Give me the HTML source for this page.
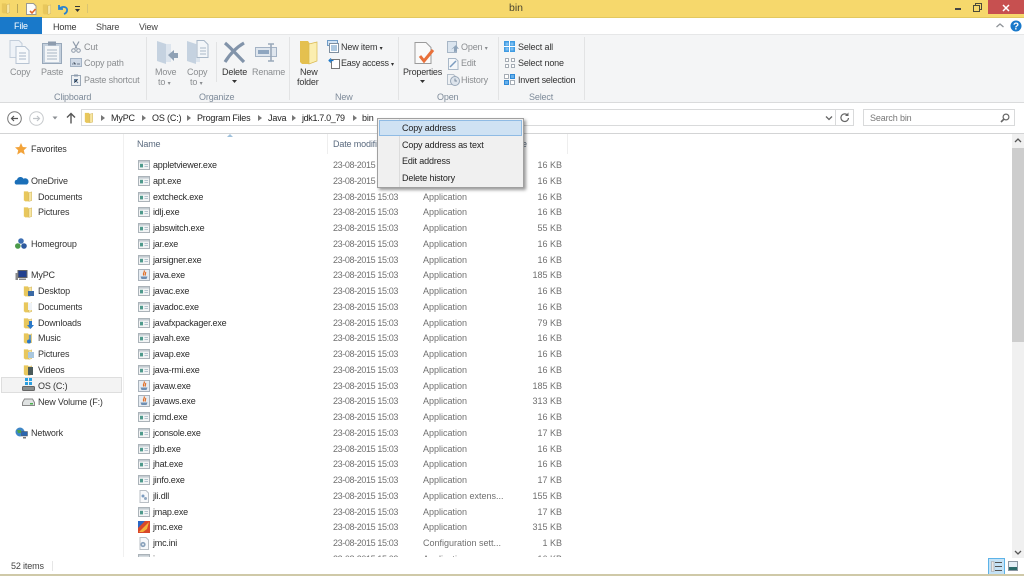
<!DOCTYPE html>
<html><head><meta charset="utf-8"><title>bin</title>
<style>
html,body{margin:0;padding:0;width:1024px;height:576px;overflow:hidden;background:#fff}
body{position:relative;font:9px/12px "Liberation Sans",sans-serif;color:#222;letter-spacing:-.15px;filter:blur(.35px)}
.t{position:absolute;white-space:nowrap;line-height:12px}
.g{color:#8a8d90}
.l{color:#7d8a99;text-align:center}
svg{position:absolute;overflow:visible}
#rows{position:absolute;left:0;top:154px;width:1010px;height:403px;overflow:hidden}
.r{position:absolute;left:0;width:1010px;height:15px}
.r svg{left:138px;top:0;transform:translateY(1px)}
.r b,.r i,.r u,.r s{position:absolute;top:2px;font-weight:normal;font-style:normal;text-decoration:none;white-space:nowrap}
.r b{left:153px;color:#2b2b2b;letter-spacing:-.2px}
.r i{left:333px;color:#707070;letter-spacing:-.38px}
.r u{left:423px;color:#707070;letter-spacing:0}
.r s{right:448px;color:#707070;letter-spacing:0}
.n{color:#333}
</style></head><body>
<svg width="0" height="0" style="position:absolute">
<defs>
<symbol id="fo" viewBox="0 0 12 14"><path d="M1 1.500h5l1 1.500v10.500H2.500L1 12z" fill="#e8c75c"/><path d="M7 3l3.500-1v10.500L7 13.500z" fill="#f7e6a3" stroke="#c9a94d" stroke-width=".5"/></symbol>
<symbol id="ex" viewBox="0 0 12 10"><rect x=".5" y=".5" width="11" height="9" fill="#f2f4f5" stroke="#abb3b9"/><rect x="1" y="1" width="10" height="1.600" fill="#c4ccd2"/><rect x="2" y="3.800" width="3" height="3.600" fill="#4f9a8c"/><path d="M6.500 4.500h3.500M6.500 6.500h3.500" stroke="#b3c3cf"/></symbol>
<symbol id="ja" viewBox="0 0 12 12"><rect x=".5" y=".5" width="11" height="11" fill="#e6ecf2" stroke="#a9b2bb"/><path d="M6 1.500c1.500 1.800-2 2.500 0 5M7.500 3c.8 1.200-1 1.800 0 3.500" stroke="#e0702a" stroke-width="1.200" fill="none"/><path d="M2.500 7.500h7l-1 2.500h-5z" fill="#6f8fb2"/></symbol>
<symbol id="dl" viewBox="0 0 12 13"><path d="M2 .5h6l2.500 2.500v9.500H2z" fill="#f7f8fa" stroke="#b9bfc5"/><circle cx="5" cy="6" r="1.500" fill="#7c9cc0"/><circle cx="7.500" cy="8.500" r="1.500" fill="#93a9c2"/></symbol>
<symbol id="in" viewBox="0 0 12 13"><path d="M2 .5h6l2.500 2.500v9.500H2z" fill="#f7f8fa" stroke="#b9bfc5"/><circle cx="5" cy="7.500" r="2.600" fill="#8aa2bb"/><circle cx="5" cy="7.500" r="1" fill="#e8eef3"/></symbol>
<symbol id="jm" viewBox="0 0 12 12"><rect width="12" height="12" fill="#d8472a"/><path d="M0 0h7L0 7z" fill="#2b66c4"/><path d="M1 11L11 1l-2 7-4 3z" fill="#f3b23a"/></symbol>
</defs></svg>

<!-- title bar -->
<div style="position:absolute;left:0;top:0;width:1024px;height:17px;background:#f6d86c;border-bottom:1px solid #e2c860"></div>
<svg style="left:1px;top:2px" width="10" height="12"><use href="#fo" width="10" height="12"/></svg>
<div style="position:absolute;left:17px;top:4px;width:1px;height:9px;background:#b7a458"></div>
<svg style="left:26px;top:3px" width="11" height="12"><path d="M.5.500h7l2.500 2.500v8.500H.5z" fill="#fdfdfb" stroke="#9a9a92"/><path d="M4 8l2 2 3.500-4" stroke="#e0662d" stroke-width="1.600" fill="none"/></svg>
<svg style="left:42px;top:3px" width="10" height="12"><use href="#fo" width="10" height="12"/></svg>
<svg style="left:57px;top:3px" width="12" height="12"><path d="M2 2v4h4M2.500 5.500C6 2.500 11 4 10 8c-.4 1.600-1.600 2.500-3 3" stroke="#2a83d0" stroke-width="1.800" fill="none"/></svg>
<svg style="left:74px;top:6px" width="7" height="7"><path d="M1 .5h5" stroke="#333"/><path d="M1 3h5L3.500 6z" fill="#333"/></svg>
<div style="position:absolute;left:87px;top:4px;width:1px;height:9px;background:#d9c472"></div>
<div class="t" style="left:509px;top:2px;font-size:10.500px;color:#4a4430;letter-spacing:0">bin</div>
<div style="position:absolute;left:955px;top:8px;width:6px;height:2px;background:#444"></div>
<svg style="left:973px;top:3px" width="9" height="9"><path d="M2.500 2.500V.5h6v6h-2M.5 2.500h6v6h-6z" fill="none" stroke="#4b4a3a"/></svg>
<div style="position:absolute;left:988px;top:0;width:36px;height:14px;background:#c75050"></div>
<svg style="left:1002px;top:4px" width="8" height="8"><path d="M1 1l6 6M7 1L1 7" stroke="#fff" stroke-width="1.500"/></svg>

<!-- tabs -->
<div style="position:absolute;left:0;top:17px;width:42px;height:18px;background:#1979ca"></div>
<div class="t" style="left:14px;top:20px;color:#fff">File</div>
<div style="position:absolute;left:42px;top:18px;width:43px;height:17px;background:#fff"></div>
<div class="t" style="left:53px;top:21px;color:#333">Home</div>
<div class="t" style="left:96px;top:21px;color:#444">Share</div>
<div class="t" style="left:139px;top:21px;color:#444">View</div>
<svg style="left:996px;top:23px" width="8" height="5"><path d="M.5 4L4 1l3.500 3" stroke="#8f9499" stroke-width="1.300" fill="none"/></svg>
<svg style="left:1010px;top:20px" width="12" height="12"><circle cx="6" cy="6" r="5.500" fill="#1979ca"/><text x="6" y="9.500" text-anchor="middle" font-size="10" font-weight="bold" fill="#fff" font-family="Liberation Sans">?</text></svg>

<!-- ribbon -->
<div style="position:absolute;left:0;top:34px;width:1024px;height:69px;background:#f4f5f6;border-top:1px solid #e6e7e8;border-bottom:1px solid #dadbdc;box-sizing:border-box"></div>
<div style="position:absolute;left:146px;top:37px;width:1px;height:63px;background:#e2e3e4"></div>
<div style="position:absolute;left:289px;top:37px;width:1px;height:63px;background:#e2e3e4"></div>
<div style="position:absolute;left:398px;top:37px;width:1px;height:63px;background:#e2e3e4"></div>
<div style="position:absolute;left:498px;top:37px;width:1px;height:63px;background:#e2e3e4"></div>
<div style="position:absolute;left:584px;top:37px;width:1px;height:63px;background:#e2e3e4"></div>
<div style="position:absolute;left:216px;top:42px;width:1px;height:40px;background:#e2e3e4"></div>

<!-- clipboard -->
<svg style="left:9px;top:40px" width="22" height="24"><path d="M1 .5h9l3 3v14H1z" fill="#eef2f7" stroke="#c3cedb"/><path d="M7 6.500h9l4 4v13H7z" fill="#f7f9fb" stroke="#b7c4d3"/><path d="M10 13h7M10 16h7M10 19h7" stroke="#aab8c8"/></svg>
<svg style="left:42px;top:41px" width="20" height="23"><rect x=".5" y="2.500" width="19" height="20" fill="#c4d0dd" stroke="#98a8ba"/><rect x="3" y="5" width="14" height="16" fill="#f4f6f8"/><rect x="6" y=".5" width="8" height="4" fill="#8d9cae"/><path d="M5 9h10M5 12h10M5 15h10M5 18h10" stroke="#a8b5c4"/></svg>
<svg style="left:71px;top:41px" width="10" height="12"><path d="M2 .5l4 7M8 .5l-4 7" stroke="#8d99a8" stroke-width="1.200"/><circle cx="2.500" cy="9.500" r="1.800" fill="none" stroke="#8d99a8"/><circle cx="7.500" cy="9.500" r="1.800" fill="none" stroke="#8d99a8"/></svg>
<svg style="left:70px;top:58px" width="12" height="10"><rect x=".5" y=".5" width="11" height="8" fill="#cfd9e6" stroke="#a3b2c4"/><path d="M2 6h1M4 4v2h2M7 6h3" stroke="#6d7c8e"/></svg>
<svg style="left:71px;top:74px" width="11" height="12"><rect x=".5" y="1.500" width="9" height="10" fill="#eef1f4" stroke="#9aa7b6"/><rect x="3" y=".5" width="4" height="2" fill="#8d9cae"/><path d="M3.500 9V5.500H7M3.500 5.500L7 9" stroke="#5f7894"/></svg>
<div class="t g" style="left:10px;top:66px">Copy</div>
<div class="t g" style="left:41px;top:66px">Paste</div>
<div class="t g" style="left:84px;top:41px">Cut</div>
<div class="t g" style="left:84px;top:57px">Copy path</div>
<div class="t g" style="left:84px;top:74px">Paste shortcut</div>
<div class="t l" style="left:54px;top:91px">Clipboard</div>

<!-- organize -->
<svg style="left:156px;top:40px" width="23" height="25"><path d="M1 1l9 3v20l-9-3z" fill="#c5d2e0"/><path d="M10 4h5v18h-5z" fill="#dde5ee"/><path d="M12 15l6-5v3h4v5h-4v3z" fill="#8fa1b5"/></svg>
<svg style="left:186px;top:40px" width="23" height="25"><path d="M1 1l9 3v20l-9-3z" fill="#c5d2e0"/><path d="M10 4h4v18h-4z" fill="#dde5ee"/><path d="M11 .5h7l4 4v13H11z" fill="#f3f6f9" stroke="#a9b8c8"/><path d="M14 8h6M14 11h6M14 14h6" stroke="#a9b8c8"/></svg>
<svg style="left:223px;top:42px" width="23" height="21"><path d="M2 1c6 5 12 12 19 19M21 1C14 5 7 12 2 20" stroke="#8294aa" stroke-width="3.200" fill="none"/></svg>
<svg style="left:255px;top:43px" width="24" height="20"><rect x=".5" y="4.500" width="21" height="9" fill="#dfe6ee" stroke="#a3b2c4"/><rect x="3" y="7" width="11" height="4" fill="#8fa6c0"/><path d="M13 1h6M13 18h6M16 1v17" stroke="#9aa9ba" stroke-width="1.600"/></svg>
<div class="t g" style="left:155px;top:66px">Move</div>
<div class="t g" style="left:158px;top:76px">to <span style="font-size:6px">&#9662;</span></div>
<div class="t g" style="left:187px;top:66px">Copy</div>
<div class="t g" style="left:190px;top:76px">to <span style="font-size:6px">&#9662;</span></div>
<div class="t" style="left:222px;top:66px;color:#333">Delete</div>
<svg style="left:232px;top:80px" width="5" height="4"><path d="M0 0h5L2.500 3z" fill="#333"/></svg>
<div class="t g" style="left:252px;top:66px">Rename</div>
<div class="t l" style="left:199px;top:91px">Organize</div>

<!-- new -->
<svg style="left:299px;top:40px" width="20" height="25"><path d="M1 1h8l2 3v20H3l-2-2z" fill="#e4c04f"/><path d="M10 4l8-2v19l-8 3z" fill="#fbeeb0" stroke="#d9b850" stroke-width=".7"/></svg>
<svg style="left:327px;top:40px" width="12" height="13"><rect x=".5" y=".5" width="10" height="5" fill="#d2e4f5" stroke="#6f9cc7"/><rect x="2.500" y="3.500" width="9" height="9" fill="#fff" stroke="#7f8f9f"/><path d="M4 6h6M4 8h6M4 10h6" stroke="#5a8fbf"/></svg>
<svg style="left:328px;top:57px" width="12" height="12"><path d="M3.500 2.500h8v9h-8z" fill="#fff" stroke="#777"/><path d="M.5 3.500h5M1 3.500l2-2M1 3.500l2 2" stroke="#1c78c8" stroke-width="1.200" fill="none"/></svg>
<div class="t n" style="left:341px;top:41px">New item <span style="font-size:6px">&#9662;</span></div>
<div class="t n" style="left:341px;top:57px;letter-spacing:-.25px">Easy access <span style="font-size:6px">&#9662;</span></div>
<div class="t n" style="left:300px;top:66px">New</div>
<div class="t n" style="left:297px;top:76px">folder</div>
<div class="t l" style="left:335px;top:91px">New</div>

<!-- open -->
<svg style="left:414px;top:42px" width="22" height="22"><path d="M1 .5h11l5 5v16H1z" fill="#fafafa" stroke="#9b9b9b"/><path d="M6 14l4 5 9-11" stroke="#e8703a" stroke-width="3" fill="none"/></svg>
<svg style="left:447px;top:41px" width="12" height="12"><rect x=".5" y=".5" width="9" height="11" fill="#dbe5ef" stroke="#a7b6c6"/><path d="M7 11V7l-3 1.500 5-4.500 3 4-2-.5v3z" fill="#8fa4ba"/></svg>
<svg style="left:448px;top:58px" width="11" height="12"><path d="M.5.500h7l2.500 2.500v8.500H.5z" fill="#f4f7fa" stroke="#a9b8c8"/><path d="M2 9l6-6" stroke="#7c9cc0" stroke-width="1.500"/></svg>
<svg style="left:447px;top:74px" width="13" height="12"><path d="M.5.500h6l2 2v8H.5z" fill="#eef1f4" stroke="#b5bfca"/><circle cx="8" cy="7" r="4.500" fill="#dde4ec" stroke="#98a7b8"/><path d="M8 4.500V7h2" stroke="#7a8a9c" fill="none"/></svg>
<div class="t n" style="left:403px;top:66px;letter-spacing:-.2px">Properties</div>
<svg style="left:420px;top:80px" width="5" height="4"><path d="M0 0h5L2.500 3z" fill="#333"/></svg>
<div class="t g" style="left:461px;top:41px">Open <span style="font-size:6px">&#9662;</span></div>
<div class="t g" style="left:461px;top:57px">Edit</div>
<div class="t g" style="left:461px;top:74px">History</div>
<div class="t l" style="left:437px;top:91px">Open</div>

<!-- select -->
<svg style="left:504px;top:41px" width="11" height="11"><rect width="11" height="11" fill="#3f9be2"/><path d="M0 5.500h11M5.500 0v11" stroke="#fff"/><path d="M1.500 1.500h3v3h-3zM6.500 1.500h3v3h-3zM1.500 6.500h3v3h-3zM6.500 6.500h3v3h-3z" fill="#7fc0f2"/></svg>
<svg style="left:505px;top:58px" width="10" height="10"><path d="M.5.500h3v3h-3zM6.500.500h3v3h-3zM.5 6.500h3v3h-3zM6.500 6.500h3v3h-3z" fill="#fff" stroke="#a6adb5"/></svg>
<svg style="left:504px;top:74px" width="11" height="11"><path d="M.5.500h4v4h-4zM6.500 6.500h4v4h-4z" fill="#fff" stroke="#a6adb5"/><path d="M6.500.500h4v4h-4zM.5 6.500h4v4h-4z" fill="#67b0ea" stroke="#2f8ad8"/></svg>
<div class="t n" style="left:518px;top:41px">Select all</div>
<div class="t n" style="left:518px;top:57px">Select none</div>
<div class="t n" style="left:518px;top:74px;letter-spacing:-.2px">Invert selection</div>
<div class="t l" style="left:529px;top:91px">Select</div>

<!-- address row -->
<svg style="left:7px;top:111px" width="15" height="15"><circle cx="7.500" cy="7.500" r="6.800" fill="#fff" stroke="#777"/><path d="M11 7.500H4.500M7 5L4.500 7.500 7 10" stroke="#555" stroke-width="1.200" fill="none"/></svg>
<svg style="left:29px;top:111px" width="15" height="15"><circle cx="7.500" cy="7.500" r="6.800" fill="#fff" stroke="#c6c9cc"/><path d="M4 7.500h6.500M8 5l2.500 2.500L8 10" stroke="#c0c4c8" stroke-width="1.200" fill="none"/></svg>
<svg style="left:52px;top:116px" width="6" height="4"><path d="M.5.500h5L3 3.500z" fill="#8b8f93"/></svg>
<svg style="left:66px;top:112px" width="10" height="12"><path d="M5 11.500V1.500M1 5.500l4-4 4 4" stroke="#555" stroke-width="1.400" fill="none"/></svg>
<div style="position:absolute;left:81px;top:109px;width:773px;height:17px;box-sizing:border-box;background:#fff;border:1px solid #d9dadb"></div>
<div style="position:absolute;left:835px;top:110px;width:1px;height:15px;background:#d9dadb"></div>
<svg style="left:84px;top:111px" width="10" height="13"><use href="#fo" width="10" height="13"/></svg>
<svg style="left:101px;top:115px" width="4" height="6"><path d="M0 0l4 3-4 3z" fill="#777"/></svg>
<svg style="left:142px;top:115px" width="4" height="6"><path d="M0 0l4 3-4 3z" fill="#777"/></svg>
<svg style="left:187px;top:115px" width="4" height="6"><path d="M0 0l4 3-4 3z" fill="#777"/></svg>
<svg style="left:258px;top:115px" width="4" height="6"><path d="M0 0l4 3-4 3z" fill="#777"/></svg>
<svg style="left:292px;top:115px" width="4" height="6"><path d="M0 0l4 3-4 3z" fill="#777"/></svg>
<svg style="left:353px;top:115px" width="4" height="6"><path d="M0 0l4 3-4 3z" fill="#777"/></svg>
<div class="t" style="left:111px;top:112px">MyPC</div>
<div class="t" style="left:152px;top:112px">OS (C:)</div>
<div class="t" style="left:197px;top:112px;letter-spacing:-.2px">Program Files</div>
<div class="t" style="left:268px;top:112px">Java</div>
<div class="t" style="left:302px;top:112px;letter-spacing:-.35px">jdk1.7.0_79</div>
<div class="t" style="left:362px;top:112px">bin</div>
<svg style="left:825px;top:116px" width="8" height="5"><path d="M1 .5L4 3.500 7 .5" stroke="#666" stroke-width="1.300" fill="none"/></svg>
<svg style="left:840px;top:112px" width="10" height="11"><path d="M8.500 6a3.800 3.800 0 1 1-1.300-3.200" stroke="#666" stroke-width="1.200" fill="none"/><path d="M8.500.5v3.500H5z" fill="#666"/></svg>
<div style="position:absolute;left:863px;top:109px;width:152px;height:17px;box-sizing:border-box;background:#fff;border:1px solid #d9dadb"></div>
<div class="t" style="left:870px;top:112px;color:#777">Search bin</div>
<svg style="left:1000px;top:113px" width="10" height="10"><circle cx="6" cy="4" r="2.900" fill="none" stroke="#666" stroke-width="1.200"/><path d="M4 6L1 9" stroke="#666" stroke-width="1.600"/></svg>
<div style="position:absolute;left:0;top:133px;width:1024px;height:1px;background:#d3d4d5"></div>

<!-- nav pane -->
<div style="position:absolute;left:123px;top:134px;width:1px;height:424px;background:#f0f0f0"></div>
<svg style="left:15px;top:143px" width="12" height="12"><path d="M6 0l1.800 4 4.200.4-3.200 2.900 1 4.300L6 9.300 2.200 11.600l1-4.300L0 4.400 4.200 4z" fill="#f2a33a"/></svg>
<div class="t n" style="left:31px;top:143px">Favorites</div>
<svg style="left:15px;top:176px" width="13" height="9"><path d="M1 8.500a2.500 2.500 0 0 1 1-4.700 3.500 3.500 0 0 1 6.500-1 3 3 0 0 1 3.500 5.700z" fill="#1b6fb8"/></svg>
<div class="t n" style="left:31px;top:175px">OneDrive</div>
<svg style="left:23px;top:190px" width="10" height="12"><use href="#fo" width="10" height="12"/></svg>
<div class="t n" style="left:38px;top:191px">Documents</div>
<svg style="left:23px;top:206px" width="10" height="12"><use href="#fo" width="10" height="12"/></svg>
<div class="t n" style="left:38px;top:206px">Pictures</div>
<svg style="left:15px;top:238px" width="12" height="12"><circle cx="6" cy="3" r="2.800" fill="#3e6fb3"/><circle cx="2.800" cy="8" r="2.800" fill="#4c9a4a"/><circle cx="9" cy="8" r="2.800" fill="#2e5a9e"/></svg>
<div class="t n" style="left:31px;top:238px">Homegroup</div>
<svg style="left:15px;top:270px" width="13" height="11"><rect x="3" y=".5" width="9" height="7" fill="#23418f" stroke="#666"/><rect x=".5" y="3" width="2.500" height="7" fill="#888"/><rect x="4" y="8.500" width="7" height="1.500" fill="#888"/></svg>
<div class="t n" style="left:31px;top:269px">MyPC</div>
<svg style="left:23px;top:285px" width="10" height="12"><use href="#fo" width="10" height="12"/></svg><div style="position:absolute;left:28px;top:291px;width:6px;height:5px;background:#3b6aa5"></div>
<div class="t n" style="left:38px;top:285px">Desktop</div>
<svg style="left:23px;top:301px" width="10" height="12"><use href="#fo" width="10" height="12"/></svg><div style="position:absolute;left:28px;top:303px;width:4px;height:7px;background:#eef2f6"></div>
<div class="t n" style="left:38px;top:301px">Documents</div>
<svg style="left:23px;top:317px" width="10" height="12"><use href="#fo" width="10" height="12"/></svg><svg style="left:27px;top:321px" width="7" height="8"><path d="M2 0h3v4h2L3.500 8 0 4h2z" fill="#2a78c8"/></svg>
<div class="t n" style="left:38px;top:317px">Downloads</div>
<svg style="left:23px;top:332px" width="10" height="12"><use href="#fo" width="10" height="12"/></svg><svg style="left:27px;top:335px" width="7" height="9"><path d="M3 0v6" stroke="#2a78c8" stroke-width="1.400"/><circle cx="2" cy="6.500" r="2" fill="#2a78c8"/></svg>
<div class="t n" style="left:38px;top:332px">Music</div>
<svg style="left:23px;top:348px" width="10" height="12"><use href="#fo" width="10" height="12"/></svg><div style="position:absolute;left:28px;top:352px;width:6px;height:6px;background:#a9c7de"></div>
<div class="t n" style="left:38px;top:348px">Pictures</div>
<svg style="left:23px;top:364px" width="10" height="12"><use href="#fo" width="10" height="12"/></svg><div style="position:absolute;left:28px;top:367px;width:5px;height:8px;background:#4a5a5a"></div>
<div class="t n" style="left:38px;top:364px">Videos</div>
<div style="position:absolute;left:1px;top:377px;width:121px;height:16px;box-sizing:border-box;background:#f3f3f3;border:1px solid #dedede"></div>
<svg style="left:22px;top:378px" width="13" height="14"><path d="M3 0h3v3H3zM7 0h3v3H7zM3 4h3v3H3zM7 4h3v3H7z" fill="#2a9fe0"/><rect x=".5" y="8.500" width="12" height="4" rx="1" fill="#8a8f8f" stroke="#666"/></svg>
<div class="t n" style="left:38px;top:380px">OS (C:)</div>
<svg style="left:22px;top:398px" width="13" height="9"><path d="M2.500 1h8l2 3.500v3H.5v-3z" fill="#dfe2e2" stroke="#888"/><rect x="8" y="5" width="3" height="1.500" fill="#4caf50"/></svg>
<div class="t n" style="left:38px;top:396px">New Volume (F:)</div>
<svg style="left:15px;top:427px" width="13" height="12"><circle cx="5" cy="5" r="4.500" fill="#3e86c6"/><path d="M2 3h4v3H3z" fill="#4ba24a"/><rect x="6.500" y="4.500" width="6" height="4.500" fill="#2a66b0" stroke="#555" stroke-width=".5"/><rect x="8" y="10" width="3" height="1.500" fill="#777"/></svg>
<div class="t n" style="left:31px;top:427px">Network</div>

<!-- headers -->
<div class="t" style="left:137px;top:138px;color:#5a6a7e">Name</div>
<div class="t" style="left:333px;top:138px;color:#5a6a7e">Date modified</div>
<div class="t" style="left:510px;top:138px;color:#5a6a7e">Size</div>
<svg style="left:227px;top:134px" width="6" height="3"><path d="M0 3l3-3 3 3z" fill="#9fc1dc"/></svg>
<div style="position:absolute;left:327px;top:134px;width:1px;height:20px;background:#eeeeee"></div>
<div style="position:absolute;left:567px;top:134px;width:1px;height:20px;background:#eeeeee"></div>

<!-- rows -->
<div id="rows">
<div class="r" style="top:3px"><svg width="12" height="10" style="top:2px"><use href="#ex"/></svg><b>appletviewer.exe</b><i>23-08-2015 15:03</i><u>Application</u><s>16 KB</s></div>
<div class="r" style="top:18.750px"><svg width="12" height="10" style="top:2px"><use href="#ex"/></svg><b>apt.exe</b><i>23-08-2015 15:03</i><u>Application</u><s>16 KB</s></div>
<div class="r" style="top:34.500px"><svg width="12" height="10" style="top:2px"><use href="#ex"/></svg><b>extcheck.exe</b><i>23-08-2015 15:03</i><u>Application</u><s>16 KB</s></div>
<div class="r" style="top:50.250px"><svg width="12" height="10" style="top:2px"><use href="#ex"/></svg><b>idlj.exe</b><i>23-08-2015 15:03</i><u>Application</u><s>16 KB</s></div>
<div class="r" style="top:66px"><svg width="12" height="10" style="top:2px"><use href="#ex"/></svg><b>jabswitch.exe</b><i>23-08-2015 15:03</i><u>Application</u><s>55 KB</s></div>
<div class="r" style="top:81.750px"><svg width="12" height="10" style="top:2px"><use href="#ex"/></svg><b>jar.exe</b><i>23-08-2015 15:03</i><u>Application</u><s>16 KB</s></div>
<div class="r" style="top:97.500px"><svg width="12" height="10" style="top:2px"><use href="#ex"/></svg><b>jarsigner.exe</b><i>23-08-2015 15:03</i><u>Application</u><s>16 KB</s></div>
<div class="r" style="top:113.250px"><svg width="12" height="12" style="top:1px"><use href="#ja"/></svg><b>java.exe</b><i>23-08-2015 15:03</i><u>Application</u><s>185 KB</s></div>
<div class="r" style="top:129px"><svg width="12" height="10" style="top:2px"><use href="#ex"/></svg><b>javac.exe</b><i>23-08-2015 15:03</i><u>Application</u><s>16 KB</s></div>
<div class="r" style="top:144.750px"><svg width="12" height="10" style="top:2px"><use href="#ex"/></svg><b>javadoc.exe</b><i>23-08-2015 15:03</i><u>Application</u><s>16 KB</s></div>
<div class="r" style="top:160.500px"><svg width="12" height="10" style="top:2px"><use href="#ex"/></svg><b>javafxpackager.exe</b><i>23-08-2015 15:03</i><u>Application</u><s>79 KB</s></div>
<div class="r" style="top:176.250px"><svg width="12" height="10" style="top:2px"><use href="#ex"/></svg><b>javah.exe</b><i>23-08-2015 15:03</i><u>Application</u><s>16 KB</s></div>
<div class="r" style="top:192px"><svg width="12" height="10" style="top:2px"><use href="#ex"/></svg><b>javap.exe</b><i>23-08-2015 15:03</i><u>Application</u><s>16 KB</s></div>
<div class="r" style="top:207.750px"><svg width="12" height="10" style="top:2px"><use href="#ex"/></svg><b>java-rmi.exe</b><i>23-08-2015 15:03</i><u>Application</u><s>16 KB</s></div>
<div class="r" style="top:223.500px"><svg width="12" height="12" style="top:1px"><use href="#ja"/></svg><b>javaw.exe</b><i>23-08-2015 15:03</i><u>Application</u><s>185 KB</s></div>
<div class="r" style="top:239.250px"><svg width="12" height="12" style="top:1px"><use href="#ja"/></svg><b>javaws.exe</b><i>23-08-2015 15:03</i><u>Application</u><s>313 KB</s></div>
<div class="r" style="top:255px"><svg width="12" height="10" style="top:2px"><use href="#ex"/></svg><b>jcmd.exe</b><i>23-08-2015 15:03</i><u>Application</u><s>16 KB</s></div>
<div class="r" style="top:270.750px"><svg width="12" height="10" style="top:2px"><use href="#ex"/></svg><b>jconsole.exe</b><i>23-08-2015 15:03</i><u>Application</u><s>17 KB</s></div>
<div class="r" style="top:286.500px"><svg width="12" height="10" style="top:2px"><use href="#ex"/></svg><b>jdb.exe</b><i>23-08-2015 15:03</i><u>Application</u><s>16 KB</s></div>
<div class="r" style="top:302.250px"><svg width="12" height="10" style="top:2px"><use href="#ex"/></svg><b>jhat.exe</b><i>23-08-2015 15:03</i><u>Application</u><s>16 KB</s></div>
<div class="r" style="top:318px"><svg width="12" height="10" style="top:2px"><use href="#ex"/></svg><b>jinfo.exe</b><i>23-08-2015 15:03</i><u>Application</u><s>17 KB</s></div>
<div class="r" style="top:333.750px"><svg width="12" height="13" style="top:1px"><use href="#dl"/></svg><b>jli.dll</b><i>23-08-2015 15:03</i><u>Application extens...</u><s>155 KB</s></div>
<div class="r" style="top:349.500px"><svg width="12" height="10" style="top:2px"><use href="#ex"/></svg><b>jmap.exe</b><i>23-08-2015 15:03</i><u>Application</u><s>17 KB</s></div>
<div class="r" style="top:365.250px"><svg width="12" height="12" style="top:1px"><use href="#jm"/></svg><b>jmc.exe</b><i>23-08-2015 15:03</i><u>Application</u><s>315 KB</s></div>
<div class="r" style="top:381px"><svg width="12" height="13" style="top:1px"><use href="#in"/></svg><b>jmc.ini</b><i>23-08-2015 15:03</i><u>Configuration sett...</u><s>1 KB</s></div>
<div class="r" style="top:396.750px"><svg width="12" height="10" style="top:2px"><use href="#ex"/></svg><b>jps.exe</b><i>23-08-2015 15:03</i><u>Application</u><s>16 KB</s></div>
</div>

<!-- scrollbar -->
<div style="position:absolute;left:1012px;top:134px;width:12px;height:424px;background:#f0f0f0"></div>
<div style="position:absolute;left:1012px;top:148px;width:12px;height:194px;background:#cdcdcd"></div>
<svg style="left:1014px;top:138px" width="8" height="5"><path d="M1 4l3-3 3 3" stroke="#555" stroke-width="1.300" fill="none"/></svg>
<svg style="left:1014px;top:550px" width="8" height="5"><path d="M1 1l3 3 3-3" stroke="#555" stroke-width="1.300" fill="none"/></svg>

<!-- context menu -->
<div style="position:absolute;left:377px;top:118px;width:147px;height:70px;box-sizing:border-box;background:#f0f0f0;border:1px solid #a0a0a0;box-shadow:2px 2px 3px rgba(0,0,0,.4)"></div>
<div style="position:absolute;left:399px;top:119px;width:1px;height:68px;background:#dcdcdc"></div>
<div style="position:absolute;left:379px;top:120px;width:143px;height:16px;box-sizing:border-box;background:#cfe2f3;border:1px solid #8fbbe4"></div>
<div class="t" style="left:402px;top:122px">Copy address</div>
<div class="t" style="left:402px;top:139px">Copy address as text</div>
<div class="t" style="left:402px;top:155px">Edit address</div>
<div class="t" style="left:402px;top:172px">Delete history</div>

<!-- status bar -->
<div style="position:absolute;left:0;top:557px;width:1012px;height:17px;background:#fff"></div>
<div class="t" style="left:11px;top:560px;color:#444">52 items</div>
<div style="position:absolute;left:52px;top:561px;width:1px;height:10px;background:#e6e6e6"></div>
<div style="position:absolute;left:988px;top:558px;width:17px;height:17px;box-sizing:border-box;background:#c4e2f6;border:1px solid #5db3e8"></div>
<svg style="left:991px;top:561px" width="12" height="11"><path d="M.5.500h2.500v10H.5z" fill="#e8e8e8" stroke="#a0a0a0" stroke-width=".6"/><path d="M4 1.500h7M4 5.500h7M4 9.500h7" stroke="#555"/></svg>
<svg style="left:1008px;top:561px" width="10" height="10"><rect x=".5" y=".5" width="9" height="9" fill="#e4eef6" stroke="#8b97a3"/><path d="M1 6h8v3H1z" fill="#2a6a6a"/></svg>
<div style="position:absolute;left:0;top:574px;width:1024px;height:2px;background:#cfc9a8"></div>
</body></html>
